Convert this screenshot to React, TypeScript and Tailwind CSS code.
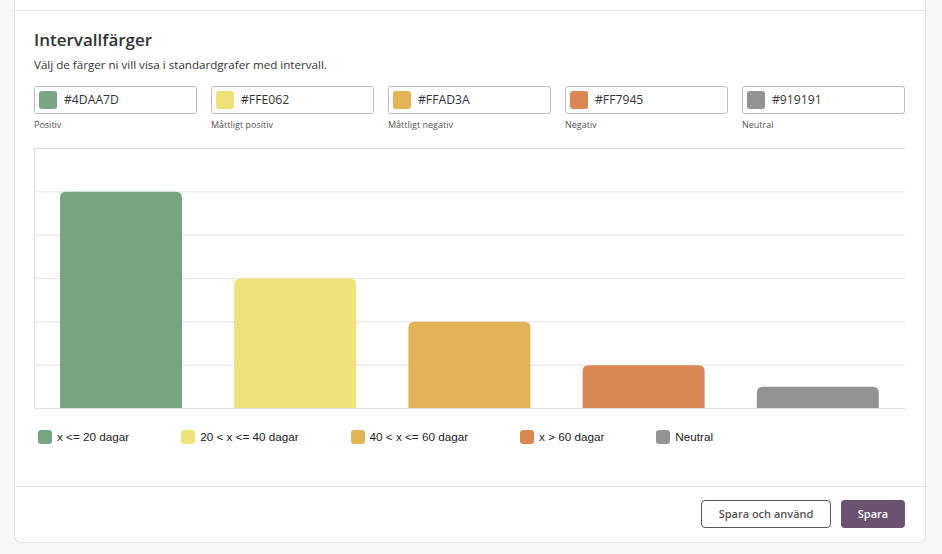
const intervals = [
  { hex: "#4DAA7D", label: "Positiv", color: "#77a582", legend: "x <= 20 dagar", value: 5 },
  { hex: "#FFE062", label: "Måttligt positiv", color: "#f0e27a", legend: "20 < x <= 40 dagar", value: 3 },
  { hex: "#FFAD3A", label: "Måttligt negativ", color: "#e3b457", legend: "40 < x <= 60 dagar", value: 2 },
  { hex: "#FF7945", label: "Negativ", color: "#d98853", legend: "x > 60 dagar", value: 1 },
  { hex: "#919191", label: "Neutral", color: "#939393", legend: "Neutral", value: 0.5 },
];

const chartWidth = 871;
const chartHeight = 260;
const maxValue = 6;

function barPath(x: number, top: number, width: number, bottom: number, r: number) {
  return `M${x},${bottom} L${x},${top + r} Q${x},${top} ${x + r},${top} L${x + width - r},${top} Q${x + width},${top} ${x + width},${top + r} L${x + width},${bottom} Z`;
}

function IntervalChart() {
  const slot = chartWidth / intervals.length;
  const gridLines = Array.from({ length: maxValue + 1 }, (_, i) => (chartHeight / maxValue) * i);

  return (
    <svg width={chartWidth} height={chartHeight + 1} className="block">
      {gridLines.map((y) => (
        <line key={y} x1={0} x2={chartWidth} y1={y + 0.5} y2={y + 0.5} stroke="#e3e3e3" strokeWidth={1} />
      ))}
      <line x1={0.5} x2={0.5} y1={0} y2={chartHeight} stroke="#e3e3e3" strokeWidth={1} />
      {intervals.map((item, i) => {
        const h = (item.value / maxValue) * chartHeight;
        const x = i * slot + 26;
        return (
          <path
            key={item.hex}
            d={barPath(x, chartHeight - h + 0.5, 122, chartHeight, 6)}
            fill={item.color}
          />
        );
      })}
    </svg>
  );
}

export default function App() {
  return (
    <div className="h-[554px] overflow-hidden bg-[#f8f8f8] font-['Open_Sans',sans-serif] text-[#333]">
      <div className="ml-[14px] w-[912px] rounded-b-[7px] border-x border-b border-[#e2e2e2] bg-white">
        <div className="h-[11px] border-b border-[#e2e2e2]" />

        <div className="pl-[19px] pr-[20px] pt-[17px]">
          <h2 className="text-[17px] font-semibold leading-[24px] text-[#333]">
            Intervallfärger
          </h2>
          <p className="mt-[5px] text-[11.6px] leading-[16px] text-[#333]">
            Välj de färger ni vill visa i standardgrafer med intervall.
          </p>

          <div className="mt-[13px] grid grid-cols-5 gap-[14px]">
            {intervals.map((item) => (
              <label key={item.hex} className="grid gap-[5px]">
                <div className="flex h-[28px] items-center gap-[7px] rounded-[3px] border border-[#bdbdbd] px-[4px]">
                  <span
                    className="h-[18px] w-[18px] shrink-0 rounded-[3px]"
                    style={{ backgroundColor: item.color }}
                  />
                  <span className="text-[12.2px] text-[#333]">{item.hex}</span>
                </div>
                <span className="text-[9px] leading-[12px] text-[#555]">
                  {item.label}
                </span>
              </label>
            ))}
          </div>

          <div className="mt-[17px]">
            <IntervalChart />
          </div>

          <div className="mt-[21px] flex items-center gap-[52px] pl-[4px] font-['Liberation_Sans',Arial,sans-serif] text-[11.7px] leading-[14px] text-[#222]">
            {intervals.map((item) => (
              <div key={item.hex} className="flex items-center gap-[5px]">
                <span
                  className="h-[14px] w-[14px] rounded-[3px]"
                  style={{ backgroundColor: item.color }}
                />
                <span>{item.legend}</span>
              </div>
            ))}
          </div>
        </div>

        <div className="mt-[42px] flex justify-end gap-[10px] border-t border-[#e2e2e2] pb-[14px] pr-[20px] pt-[13px]">
          <button
            type="button"
            className="h-[28px] w-[130px] rounded-[4px] border border-[#555] bg-white text-[11px] font-semibold text-[#555]"
          >
            Spara och använd
          </button>
          <button
            type="button"
            className="h-[28px] w-[64px] rounded-[4px] bg-[#6b5270] text-[11px] font-semibold text-white"
          >
            Spara
          </button>
        </div>
      </div>
    </div>
  );
}
